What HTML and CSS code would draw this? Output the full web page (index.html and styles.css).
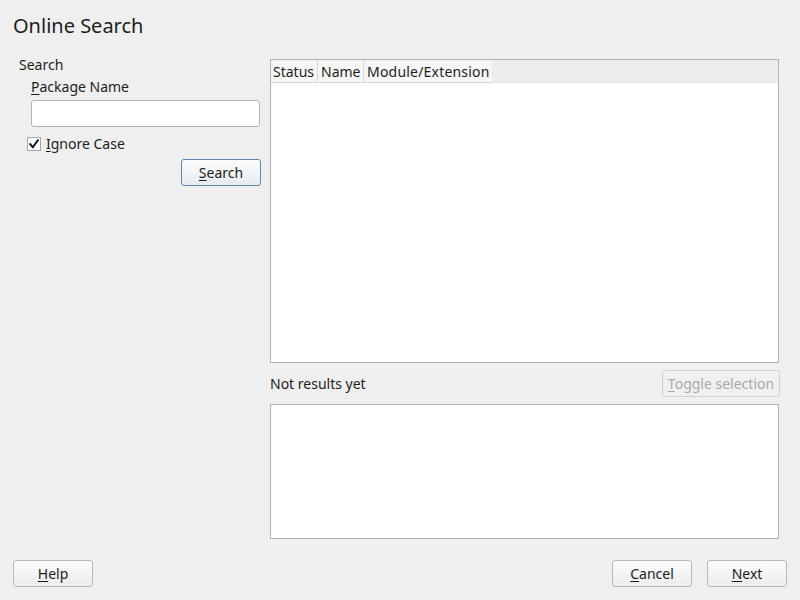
FILE: index.html
```html
<!DOCTYPE html>
<html>
<head>
<meta charset="utf-8">
<link rel="stylesheet" href="styles.css">
</head>
<body>
<div class="window">
  <h1 class="title">Online Search</h1>
  <div class="main">
    <div class="left">
      <div class="frame-label">Search</div>
      <div class="frame-body">
        <label class="field-label"><u>P</u>ackage Name</label>
        <input class="text-input" type="text">
        <div class="check-row">
          <span class="checkbox"><svg width="12" height="12" viewBox="0 0 12 12"><path d="M2.2 6.2 L4.8 9.2 L9.8 2.4" fill="none" stroke="#111" stroke-width="1.9" stroke-linecap="square"/></svg></span>
          <span class="check-label"><u>I</u>gnore Case</span>
        </div>
        <div class="search-row">
          <button class="btn btn-default"><u>S</u>earch</button>
        </div>
      </div>
    </div>
    <div class="right">
      <div class="table">
        <div class="table-head">
          <div class="th th-status">Status</div>
          <div class="th th-name">Name</div>
          <div class="th th-last">Module/Extension</div>
        </div>
        <div class="table-body"></div>
      </div>
      <div class="status-row">
        <span class="status-text">Not results yet</span>
        <button class="btn btn-disabled"><u>T</u>oggle selection</button>
      </div>
      <div class="details"></div>
    </div>
  </div>
  <div class="footer">
    <button class="btn btn-foot"><u>H</u>elp</button>
    <div class="footer-right">
      <button class="btn btn-foot"><u>C</u>ancel</button>
      <button class="btn btn-foot"><u>N</u>ext</button>
    </div>
  </div>
</div>
</body>
</html>
```
FILE: styles.css
```css
* { box-sizing: border-box; }
html, body {
  margin: 0;
  padding: 0;
  background: #efefef;
}
body {
  font-family: "Noto Sans", "DejaVu Sans", sans-serif;
  font-size: 14px;
  color: #1b1e20;
}
u { text-decoration: underline; text-underline-offset: 2px; }
.window {
  width: 800px;
  height: 600px;
  display: flex;
  flex-direction: column;
}
.title {
  margin: 0;
  padding: 12px 0 0 13px;
  font-size: 20px;
  font-weight: normal;
  line-height: 28px;
  height: 53px;
}
.main {
  display: flex;
  gap: 9px;
  padding: 0 21px 0 13px;
  height: 486px;
}
.left {
  width: 248px;
  padding-top: 2px;
}
.frame-label {
  padding-left: 6px;
  line-height: 20px;
}
.frame-body {
  padding-left: 18px;
}
.field-label {
  display: block;
  line-height: 22px;
  height: 25px;
  padding-top: 1px;
}
.text-input {
  display: block;
  width: 229px;
  height: 27px;
  border: 1px solid #b5b5b5;
  border-radius: 3px;
  background: #fff;
  margin: 0;
  outline: none;
}
.check-row {
  display: flex;
  align-items: center;
  margin-top: 9px;
  margin-left: -4px;
  height: 15px;
}
.checkbox {
  width: 14px;
  height: 14px;
  border: 1px solid #a8a8a8;
  background: #fff;
  display: flex;
  align-items: center;
  justify-content: center;
}
.check-label {
  margin-left: 5px;
}
.search-row {
  display: flex;
  justify-content: flex-end;
  margin-top: 8px;
  width: 230px;
}
.btn {
  font-family: "Noto Sans", "DejaVu Sans", sans-serif;
  font-size: 14px;
  color: #1b1e20;
  height: 27px;
  width: 80px;
  padding: 0;
  border: 1px solid #b8b8b8;
  border-radius: 3px;
  background: linear-gradient(#fbfbfb, #ececec);
}
.btn-default {
  border-color: #5f87a9;
  background: linear-gradient(#fdfdfd, #e6ebf0);
}
.btn-disabled {
  width: 118px;
  color: #a9a9a9;
  border-color: #d0d0d0;
  background: #f0f0f0;
}
.right {
  flex: 1;
  display: flex;
  flex-direction: column;
  padding-top: 6px;
}
.table {
  height: 305px;
  border: 1px solid #b3b3b3;
  background: #fff;
  display: flex;
  flex-direction: column;
}
.table-head {
  display: flex;
  height: 23px;
  background: #ececec;
}
.th {
  background: #f6f6f6;
  border-right: 1px solid #d8d8d8;
  border-bottom: 1px solid #d8d8d8;
  padding: 1px 0 0 2px;
  line-height: 21px;
  white-space: nowrap;
}
.th-status { width: 47px; }
.th-name { width: 46px; padding-left: 3px; }
.th-last {
  width: 128px;
  padding-left: 3px;
  border-right: none;
  letter-spacing: 0.2px;
}
.table-body {
  flex: 1;
}
.status-row {
  display: flex;
  justify-content: space-between;
  align-items: center;
  margin-top: 7px;
  margin-right: -1px;
  height: 27px;
}
.details {
  margin-top: 7px;
  height: 135px;
  border: 1px solid #b3b3b3;
  background: #fff;
}
.footer {
  display: flex;
  justify-content: space-between;
  padding: 21px 13px 0 13px;
}
.footer-right {
  display: flex;
  gap: 15px;
}
.btn-foot {
  width: 80px;
  height: 27px;
}
```
